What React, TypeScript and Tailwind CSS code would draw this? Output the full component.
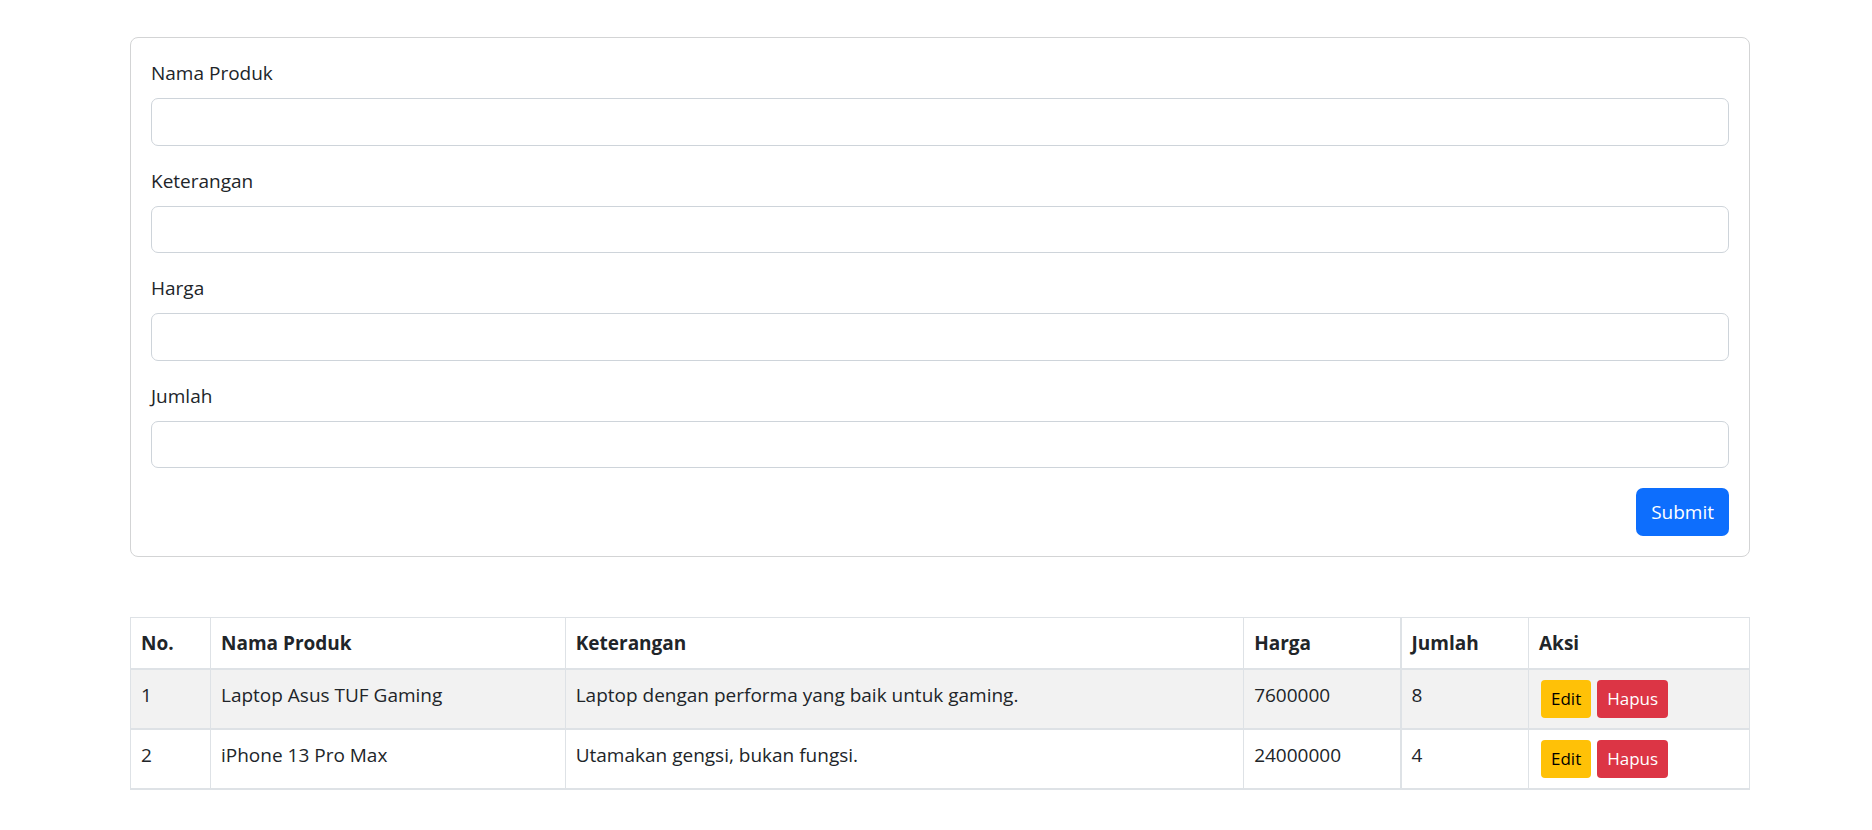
import React from "react";

const rows = [
  { no: 1, nama: "Laptop Asus TUF Gaming", ket: "Laptop dengan performa yang baik untuk gaming.", harga: "7600000", jumlah: "8" },
  { no: 2, nama: "iPhone 13 Pro Max", ket: "Utamakan gengsi, bukan fungsi.", harga: "24000000", jumlah: "4" },
];

const fields = ["Nama Produk", "Keterangan", "Harga", "Jumlah"];

export default function App() {
  return (
    <div
      className="min-h-[830px] bg-white text-[#212529] text-[19px] leading-[30px]"
      style={{ fontFamily: '"Segoe UI", "Open Sans", "Noto Sans", sans-serif' }}
    >
      <div className="ml-[130px] w-[1620px] pt-[37px]">
        <div className="rounded-[8px] border border-[#d3d4d5] p-[20px]">
          {fields.map((f) => (
            <div key={f} className="mb-[20px]">
              <label className="mb-[10px] block">{f}</label>
              <input className="block h-[47.5px] w-full rounded-[7px] border border-[#ced4da] px-[15px] outline-none" />
            </div>
          ))}
          <div className="flex justify-end">
            <button className="h-[48px] rounded-[7px] bg-[#0d6efd] px-[15px] text-white">Submit</button>
          </div>
        </div>

        <table className="mt-[60px] w-full border-collapse text-left">
          <colgroup>
            <col className="w-[80px]" />
            <col className="w-[355px]" />
            <col className="w-[679px]" />
            <col className="w-[157px]" />
            <col className="w-[128px]" />
            <col className="w-[221px]" />
          </colgroup>
          <thead>
            <tr className="border-b-2 border-[#dee2e6]">
              <th className="border border-[#dee2e6] px-[10px] py-[10px] font-bold">No.</th>
              <th className="border border-[#dee2e6] px-[10px] py-[10px] font-bold">Nama Produk</th>
              <th className="border border-[#dee2e6] px-[10px] py-[10px] font-bold">Keterangan</th>
              <th className="border border-[#dee2e6] border-r-2 px-[10px] py-[10px] font-bold">Harga</th>
              <th className="border border-[#dee2e6] px-[10px] py-[10px] font-bold">Jumlah</th>
              <th className="border border-[#dee2e6] px-[10px] py-[10px] font-bold">Aksi</th>
            </tr>
          </thead>
          <tbody>
            {rows.map((r, i) => (
              <tr key={r.no} className={i % 2 === 0 ? "bg-[#f2f2f2]" : "bg-white"}>
                <td className="border border-b-2 border-[#dee2e6] px-[10px] py-[10px] align-top">{r.no}</td>
                <td className="border border-b-2 border-[#dee2e6] px-[10px] py-[10px] align-top">{r.nama}</td>
                <td className="border border-b-2 border-[#dee2e6] px-[10px] py-[10px] align-top">{r.ket}</td>
                <td className="border border-b-2 border-r-2 border-[#dee2e6] px-[10px] py-[10px] align-top">{r.harga}</td>
                <td className="border border-b-2 border-[#dee2e6] px-[10px] py-[10px] align-top">{r.jumlah}</td>
                <td className="border border-b-2 border-[#dee2e6] px-[10px] py-[10px] align-top">
                  <div className="flex gap-[6px] pl-[2px]">
                    <button className="h-[38px] rounded-[4px] bg-[#ffc107] px-[10px] text-[17px] text-black">Edit</button>
                    <button className="h-[38px] rounded-[4px] bg-[#dc3545] px-[10px] text-[17px] text-white">Hapus</button>
                  </div>
                </td>
              </tr>
            ))}
          </tbody>
        </table>
      </div>
    </div>
  );
}
